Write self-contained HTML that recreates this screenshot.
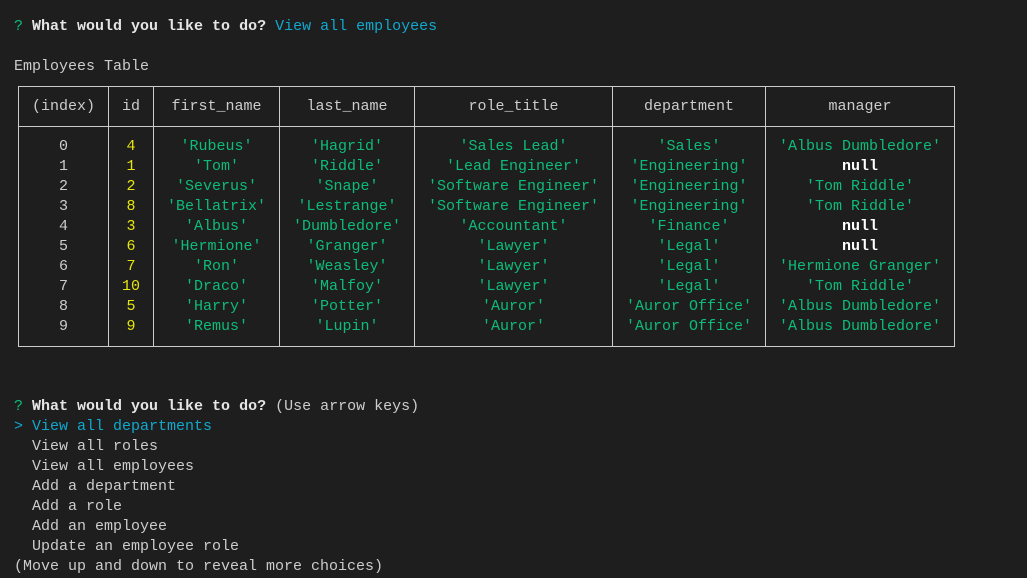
<!DOCTYPE html>
<html><head><meta charset="utf-8"><style>
html,body{margin:0;padding:0;background:#1e1e1e;width:1027px;height:578px;overflow:hidden}
body{font-family:"Liberation Mono",monospace;font-size:15px;line-height:20px;color:#cccccc;position:relative}
.l{position:absolute;left:14px;white-space:pre;height:20px;margin-top:1px}
.g{color:#0dbc79}.y{color:#e5e510}.c{color:#11a8cd}.b{font-weight:bold;color:#e5e5e5}.w{font-weight:bold;color:#fff}
.r{position:absolute;left:14px;height:20px;white-space:pre;margin-top:1px}
.r span{position:absolute;text-align:center;top:0}
.r span:nth-child(1){left:9px;width:81px}
.r span:nth-child(2){left:99px;width:36px}
.r span:nth-child(3){left:144px;width:117px}
.r span:nth-child(4){left:270px;width:126px}
.r span:nth-child(5){left:405px;width:189px}
.r span:nth-child(6){left:603px;width:144px}
.r span:nth-child(7){left:756px;width:180px}
.v{position:absolute;top:86px;height:261px;width:1px;background:#cccccc}
.h{position:absolute;left:18px;width:937px;height:1px;background:#cccccc}
</style></head><body>
<div class="l" style="top:16px"><span class="g">?</span> <span class="b">What would you like to do?</span> <span class="c">View all employees</span></div>
<div class="l" style="top:56px">Employees Table</div>
<div class="h" style="top:86px"></div><div class="h" style="top:126px"></div><div class="h" style="top:346px"></div>
<div class="v" style="left:18px"></div><div class="v" style="left:108px"></div><div class="v" style="left:153px"></div><div class="v" style="left:279px"></div><div class="v" style="left:414px"></div><div class="v" style="left:612px"></div><div class="v" style="left:765px"></div><div class="v" style="left:954px"></div>
<div class="r" style="top:96px"><span>(index)</span><span>id</span><span>first_name</span><span>last_name</span><span>role_title</span><span>department</span><span>manager</span></div>
<div class="r" style="top:136px"><span>0</span><span class="y">4</span><span class="g">'Rubeus'</span><span class="g">'Hagrid'</span><span class="g">'Sales Lead'</span><span class="g">'Sales'</span><span class="g">'Albus Dumbledore'</span></div>
<div class="r" style="top:156px"><span>1</span><span class="y">1</span><span class="g">'Tom'</span><span class="g">'Riddle'</span><span class="g">'Lead Engineer'</span><span class="g">'Engineering'</span><span class="w">null</span></div>
<div class="r" style="top:176px"><span>2</span><span class="y">2</span><span class="g">'Severus'</span><span class="g">'Snape'</span><span class="g">'Software Engineer'</span><span class="g">'Engineering'</span><span class="g">'Tom Riddle'</span></div>
<div class="r" style="top:196px"><span>3</span><span class="y">8</span><span class="g">'Bellatrix'</span><span class="g">'Lestrange'</span><span class="g">'Software Engineer'</span><span class="g">'Engineering'</span><span class="g">'Tom Riddle'</span></div>
<div class="r" style="top:216px"><span>4</span><span class="y">3</span><span class="g">'Albus'</span><span class="g">'Dumbledore'</span><span class="g">'Accountant'</span><span class="g">'Finance'</span><span class="w">null</span></div>
<div class="r" style="top:236px"><span>5</span><span class="y">6</span><span class="g">'Hermione'</span><span class="g">'Granger'</span><span class="g">'Lawyer'</span><span class="g">'Legal'</span><span class="w">null</span></div>
<div class="r" style="top:256px"><span>6</span><span class="y">7</span><span class="g">'Ron'</span><span class="g">'Weasley'</span><span class="g">'Lawyer'</span><span class="g">'Legal'</span><span class="g">'Hermione Granger'</span></div>
<div class="r" style="top:276px"><span>7</span><span class="y">10</span><span class="g">'Draco'</span><span class="g">'Malfoy'</span><span class="g">'Lawyer'</span><span class="g">'Legal'</span><span class="g">'Tom Riddle'</span></div>
<div class="r" style="top:296px"><span>8</span><span class="y">5</span><span class="g">'Harry'</span><span class="g">'Potter'</span><span class="g">'Auror'</span><span class="g">'Auror Office'</span><span class="g">'Albus Dumbledore'</span></div>
<div class="r" style="top:316px"><span>9</span><span class="y">9</span><span class="g">'Remus'</span><span class="g">'Lupin'</span><span class="g">'Auror'</span><span class="g">'Auror Office'</span><span class="g">'Albus Dumbledore'</span></div>
<div class="l" style="top:396px"><span class="g">?</span> <span class="b">What would you like to do?</span> (Use arrow keys)</div>
<div class="l c" style="top:416px">&gt; View all departments</div>
<div class="l" style="top:436px">  View all roles</div>
<div class="l" style="top:456px">  View all employees</div>
<div class="l" style="top:476px">  Add a department</div>
<div class="l" style="top:496px">  Add a role</div>
<div class="l" style="top:516px">  Add an employee</div>
<div class="l" style="top:536px">  Update an employee role</div>
<div class="l" style="top:556px">(Move up and down to reveal more choices)</div>
</body></html>
